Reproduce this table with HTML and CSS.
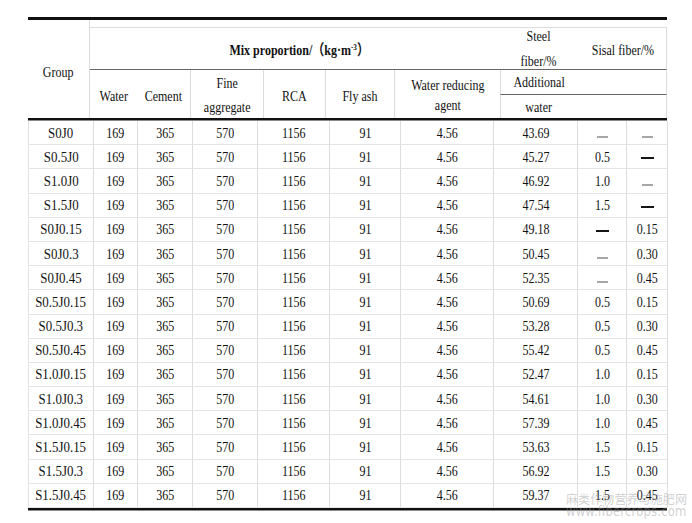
FILE: index.html
```html
<!DOCTYPE html>
<html>
<head>
<meta charset="utf-8">
<link rel="stylesheet" href="styles.css">
</head>
<body>
<div class="page">
  <div class="tbl">
    <div class="head">
      <div class="h group"><span class="t">Group</span></div>
      <div class="h mix"><span class="t b">Mix proportion/（kg·m<sup>-3</sup>）</span></div>
      <div class="h steel"><span class="t two l25">Steel<br>fiber/%</span></div>
      <div class="h sisal"><span class="t">Sisal fiber/%</span></div>
      <div class="h water"><span class="t">Water</span></div>
      <div class="h cement"><span class="t">Cement</span></div>
      <div class="h fine"><span class="t two l24">Fine<br>aggregate</span></div>
      <div class="h rca"><span class="t">RCA</span></div>
      <div class="h fly"><span class="t">Fly ash</span></div>
      <div class="h wr"><span class="t two l20">Water reducing<br>agent</span></div>
      <div class="h add1"><span class="t">Additional</span></div>
      <div class="h add2"><span class="t">water</span></div>
      <div class="h blank1"></div>
      <div class="h blank2"></div>
    </div>
    <div class="rule"></div>
    <div class="body" id="body"></div>
    <div class="rule"></div>
  </div>
  <div class="mark">
    <div class="mark-cn">麻类作物营养与施肥网</div>
    <div class="mark-en">www.fibercrops.com</div>
  </div>
</div>
<script src="app.js"></script>
</body>
</html>
```

FILE: app.js
```js
const rows = [
  ["S0J0","43.69","L","L"],
  ["S0.5J0","45.27","0.5","B"],
  ["S1.0J0","46.92","1.0","L"],
  ["S1.5J0","47.54","1.5","B"],
  ["S0J0.15","49.18","B","0.15"],
  ["S0J0.3","50.45","L","0.30"],
  ["S0J0.45","52.35","L","0.45"],
  ["S0.5J0.15","50.69","0.5","0.15"],
  ["S0.5J0.3","53.28","0.5","0.30"],
  ["S0.5J0.45","55.42","0.5","0.45"],
  ["S1.0J0.15","52.47","1.0","0.15"],
  ["S1.0J0.3","54.61","1.0","0.30"],
  ["S1.0J0.45","57.39","1.0","0.45"],
  ["S1.5J0.15","53.63","1.5","0.15"],
  ["S1.5J0.3","56.92","1.5","0.30"],
  ["S1.5J0.45","59.37","1.5","0.45"]
];
const body = document.getElementById("body");
function cell(v, extra) {
  const d = document.createElement("div");
  d.className = "c" + (extra ? " " + extra : "");
  if (v === "L") {
    d.innerHTML = '<span class="dash light"></span>';
  } else if (v === "B") {
    d.innerHTML = '<span class="dash bold"></span>';
  } else {
    d.innerHTML = '<span class="t">' + v + '</span>';
  }
  body.appendChild(d);
}
rows.forEach(r => {
  cell(r[0], "g");
  ["169","365","570","1156","91","4.56"].forEach(v => cell(v));
  cell(r[1]);
  cell(r[2]);
  cell(r[3], "last");
});
```

FILE: styles.css
```css
html, body {
  margin: 0;
  padding: 0;
  background: #fff;
}
.page {
  position: relative;
  width: 692px;
  height: 523px;
  font-family: "Liberation Serif", "Noto Sans CJK SC", serif;
  font-size: 15px;
  color: #111;
}
.tbl {
  margin-left: 28px;
  padding-top: 17px;
  width: 639px;
}
.t {
  display: inline-block;
  transform: scaleX(0.8);
  white-space: nowrap;
  line-height: 1;
}
.b { font-weight: bold; }
.t sup { font-size: 9px; vertical-align: 5px; line-height: 0; }
.two { text-align: center; }
.l25 { line-height: 25px; }
.l24 { line-height: 24px; }
.l20 { line-height: 20px; }

.head {
  display: grid;
  grid-template-columns: 62px 47px 53px 73px 62px 69px 106px 77px 90px;
  grid-template-rows: 7px 43px 25px 23px;
  border-top: 3px solid #111;
  box-sizing: border-box;
}
.h {
  display: flex;
  align-items: center;
  justify-content: center;
  box-sizing: border-box;
}
.group { grid-column: 1; grid-row: 1 / 5; padding-top: 6px; border-right: 1px solid #dcdcdc; }
.mix { grid-column: 2 / 8; grid-row: 2; border-top: 1px solid #dcdcdc; border-bottom: 1px solid #666; padding-left: 8px; padding-top: 3px; }
.steel { grid-column: 8; grid-row: 2; border-top: 1px solid #dcdcdc; border-bottom: 1px solid #666; padding-top: 1px; }
.sisal { grid-column: 9; grid-row: 2; border-top: 1px solid #dcdcdc; border-right: 1px solid #dcdcdc; border-bottom: 1px solid #666; padding-left: 2px; padding-top: 3px; }
.water { grid-column: 2; grid-row: 3 / 5; padding-top: 4px; }
.cement { grid-column: 3; grid-row: 3 / 5; padding-top: 4px; }
.fine { grid-column: 4; grid-row: 3 / 5; border-left: 1px solid #dcdcdc; padding-top: 2px; }
.rca { grid-column: 5; grid-row: 3 / 5; border-left: 1px solid #dcdcdc; padding-top: 4px; }
.fly { grid-column: 6; grid-row: 3 / 5; border-left: 1px solid #dcdcdc; padding-top: 4px; }
.wr { grid-column: 7; grid-row: 3 / 5; border-left: 1px solid #dcdcdc; padding-top: 2px; }
.add1 { grid-column: 8; grid-row: 3; border-left: 1px solid #dcdcdc; border-bottom: 1px solid #666; }
.add2 { grid-column: 8; grid-row: 4; border-left: 1px solid #dcdcdc; padding-top: 2px; }
.blank1 { grid-column: 9; grid-row: 3; border-right: 1px solid #dcdcdc; border-bottom: 1px solid #666; }
.blank2 { grid-column: 9; grid-row: 4; border-right: 1px solid #dcdcdc; }

.rule {
  height: 2px;
  background: #111;
  border-bottom: 1px solid #8a8a8a;
}
.body {
  display: grid;
  grid-template-columns: 65px 44px 55px 65px 72px 71px 93px 84px 49px 41px;
  grid-auto-rows: 24.2px;
  border-left: 1px solid #e2e2e2;
  box-sizing: border-box;
}
.c {
  display: flex;
  align-items: center;
  justify-content: center;
  border-right: 1px solid #dedede;
  border-bottom: 1px solid #e4e4e4;
  box-sizing: border-box;
  padding-top: 1px;
}
.c.g .t { transform: scaleX(0.86); }
.dash {
  display: inline-block;
}
.dash.light {
  width: 11px;
  height: 2px;
  background: #a6a6a6;
  margin-top: 7px;
}
.dash.bold {
  width: 13px;
  height: 2px;
  background: #151515;
  margin-top: 2px;
}

.mark {
  position: absolute;
  left: 566px;
  top: 492px;
  width: 124px;
  color: rgba(150, 150, 150, 0.45);
  font-family: "Noto Sans CJK SC", "Noto Sans", sans-serif;
  line-height: 13px;
}
.mark-cn {
  font-size: 12px;
  letter-spacing: 0.1px;
}
.mark-en {
  font-size: 13.5px;
  letter-spacing: 0.2px;
  font-family: "DejaVu Sans", sans-serif;
  transform: scaleX(0.86);
  transform-origin: left;
}
```
